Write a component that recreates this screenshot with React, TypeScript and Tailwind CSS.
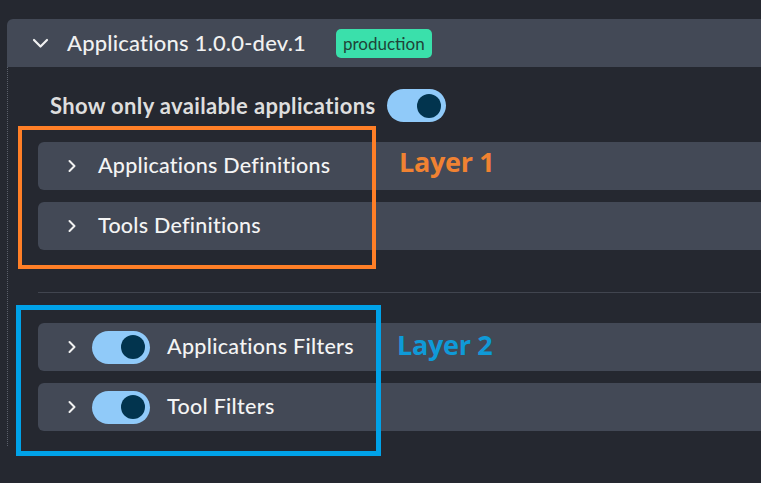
import React from "react";

const font = { fontFamily: "Lato, 'Noto Sans', sans-serif" };

function ChevronRight() {
  return (
    <svg width="10" height="14" viewBox="0 0 10 14" className="shrink-0">
      <path d="M2.5 2 L7.5 7 L2.5 12" fill="none" stroke="#f1f1f1" strokeWidth="2" strokeLinecap="round" strokeLinejoin="round" />
    </svg>
  );
}

function ChevronDown() {
  return (
    <svg width="17" height="11" viewBox="0 0 17 11" className="shrink-0">
      <path d="M2 2 L8.5 8.5 L15 2" fill="none" stroke="#f1f1f1" strokeWidth="2.2" strokeLinecap="round" strokeLinejoin="round" />
    </svg>
  );
}

function Switch({ w = 59 }: { w?: number }) {
  return (
    <div className={`${w === 59 ? "w-[59px]" : "w-[58px]"} h-[33px] rounded-full bg-[#90caf9] flex items-center justify-end pr-[5px] shrink-0`}>
      <div className="w-[24px] h-[24px] rounded-full bg-[#02344e]" />
    </div>
  );
}

function Panel({ children }: { children: React.ReactNode }) {
  return (
    <div className="h-[48px] bg-[#434956] rounded-l-[6px] flex items-center pl-[29px]">{children}</div>
  );
}

export default function App() {
  return (
    <div className="relative min-h-screen w-full overflow-hidden bg-[#252830] pt-[19px] pl-[7px]" style={font}>
      {/* Header */}
      <div className="h-[48px] bg-[#434956] rounded-tl-[6px] flex items-center pl-[25px]">
        <ChevronDown />
        <span className="ml-[18px] text-[22px] leading-none text-[#f1f1f1] font-medium tracking-[0.2px]">Applications 1.0.0-dev.1</span>
        <span className="ml-[30px] h-[29px] px-[7px] rounded-[5px] bg-[#3ae0ab] text-[#1f4438] text-[17px] leading-none flex items-center">production</span>
      </div>

      {/* Body */}
      <div className="border-l border-dotted border-[#5a5f6a] pl-[30px] pt-[22px] pb-[15px]">
        <div className="flex items-center pl-[12px] gap-[12px]">
          <span className="text-[22px] leading-none font-bold text-[#dedede] tracking-[0.35px]">Show only available applications</span>
          <Switch />
        </div>

        <div className="mt-[20px] flex flex-col gap-[12px]">
          <Panel>
            <ChevronRight />
            <span className="ml-[21px] text-[21.5px] leading-none text-[#f4f4f4] font-medium tracking-[0.25px]">Applications Definitions</span>
          </Panel>
          <Panel>
            <ChevronRight />
            <span className="ml-[21px] text-[21.5px] leading-none text-[#f4f4f4] font-medium tracking-[0.25px]">Tools Definitions</span>
          </Panel>
        </div>

        <div className="mt-[42px] h-px bg-[#41454f]" />

        <div className="mt-[30px] flex flex-col gap-[12px]">
          <Panel>
            <ChevronRight />
            <div className="ml-[15px]"><Switch w={58} /></div>
            <span className="ml-[17px] text-[21.5px] leading-none text-[#f4f4f4] font-medium tracking-[0.3px]">Applications Filters</span>
          </Panel>
          <Panel>
            <ChevronRight />
            <div className="ml-[15px]"><Switch w={58} /></div>
            <span className="ml-[17px] text-[21.5px] leading-none text-[#f4f4f4] font-medium tracking-[0.3px]">Tool Filters</span>
          </Panel>
        </div>
      </div>

      {/* Annotations */}
      <div className="absolute left-[18px] top-[126px] w-[358px] h-[143px] border-[4px] border-[#ff7f27] pointer-events-none" />
      <div className="absolute left-[399px] top-[148px] text-[27px] font-bold text-[#f08232] leading-none tracking-[-0.3px]" style={{ fontFamily: "'Open Sans', sans-serif" }}>Layer 1</div>
      <div className="absolute left-[16px] top-[305px] w-[365px] h-[151px] border-[5px] border-[#00a2e8] pointer-events-none" />
      <div className="absolute left-[397px] top-[331px] text-[27px] font-bold text-[#0f9ad8] leading-none tracking-[-0.3px]" style={{ fontFamily: "'Open Sans', sans-serif" }}>Layer 2</div>
    </div>
  );
}
